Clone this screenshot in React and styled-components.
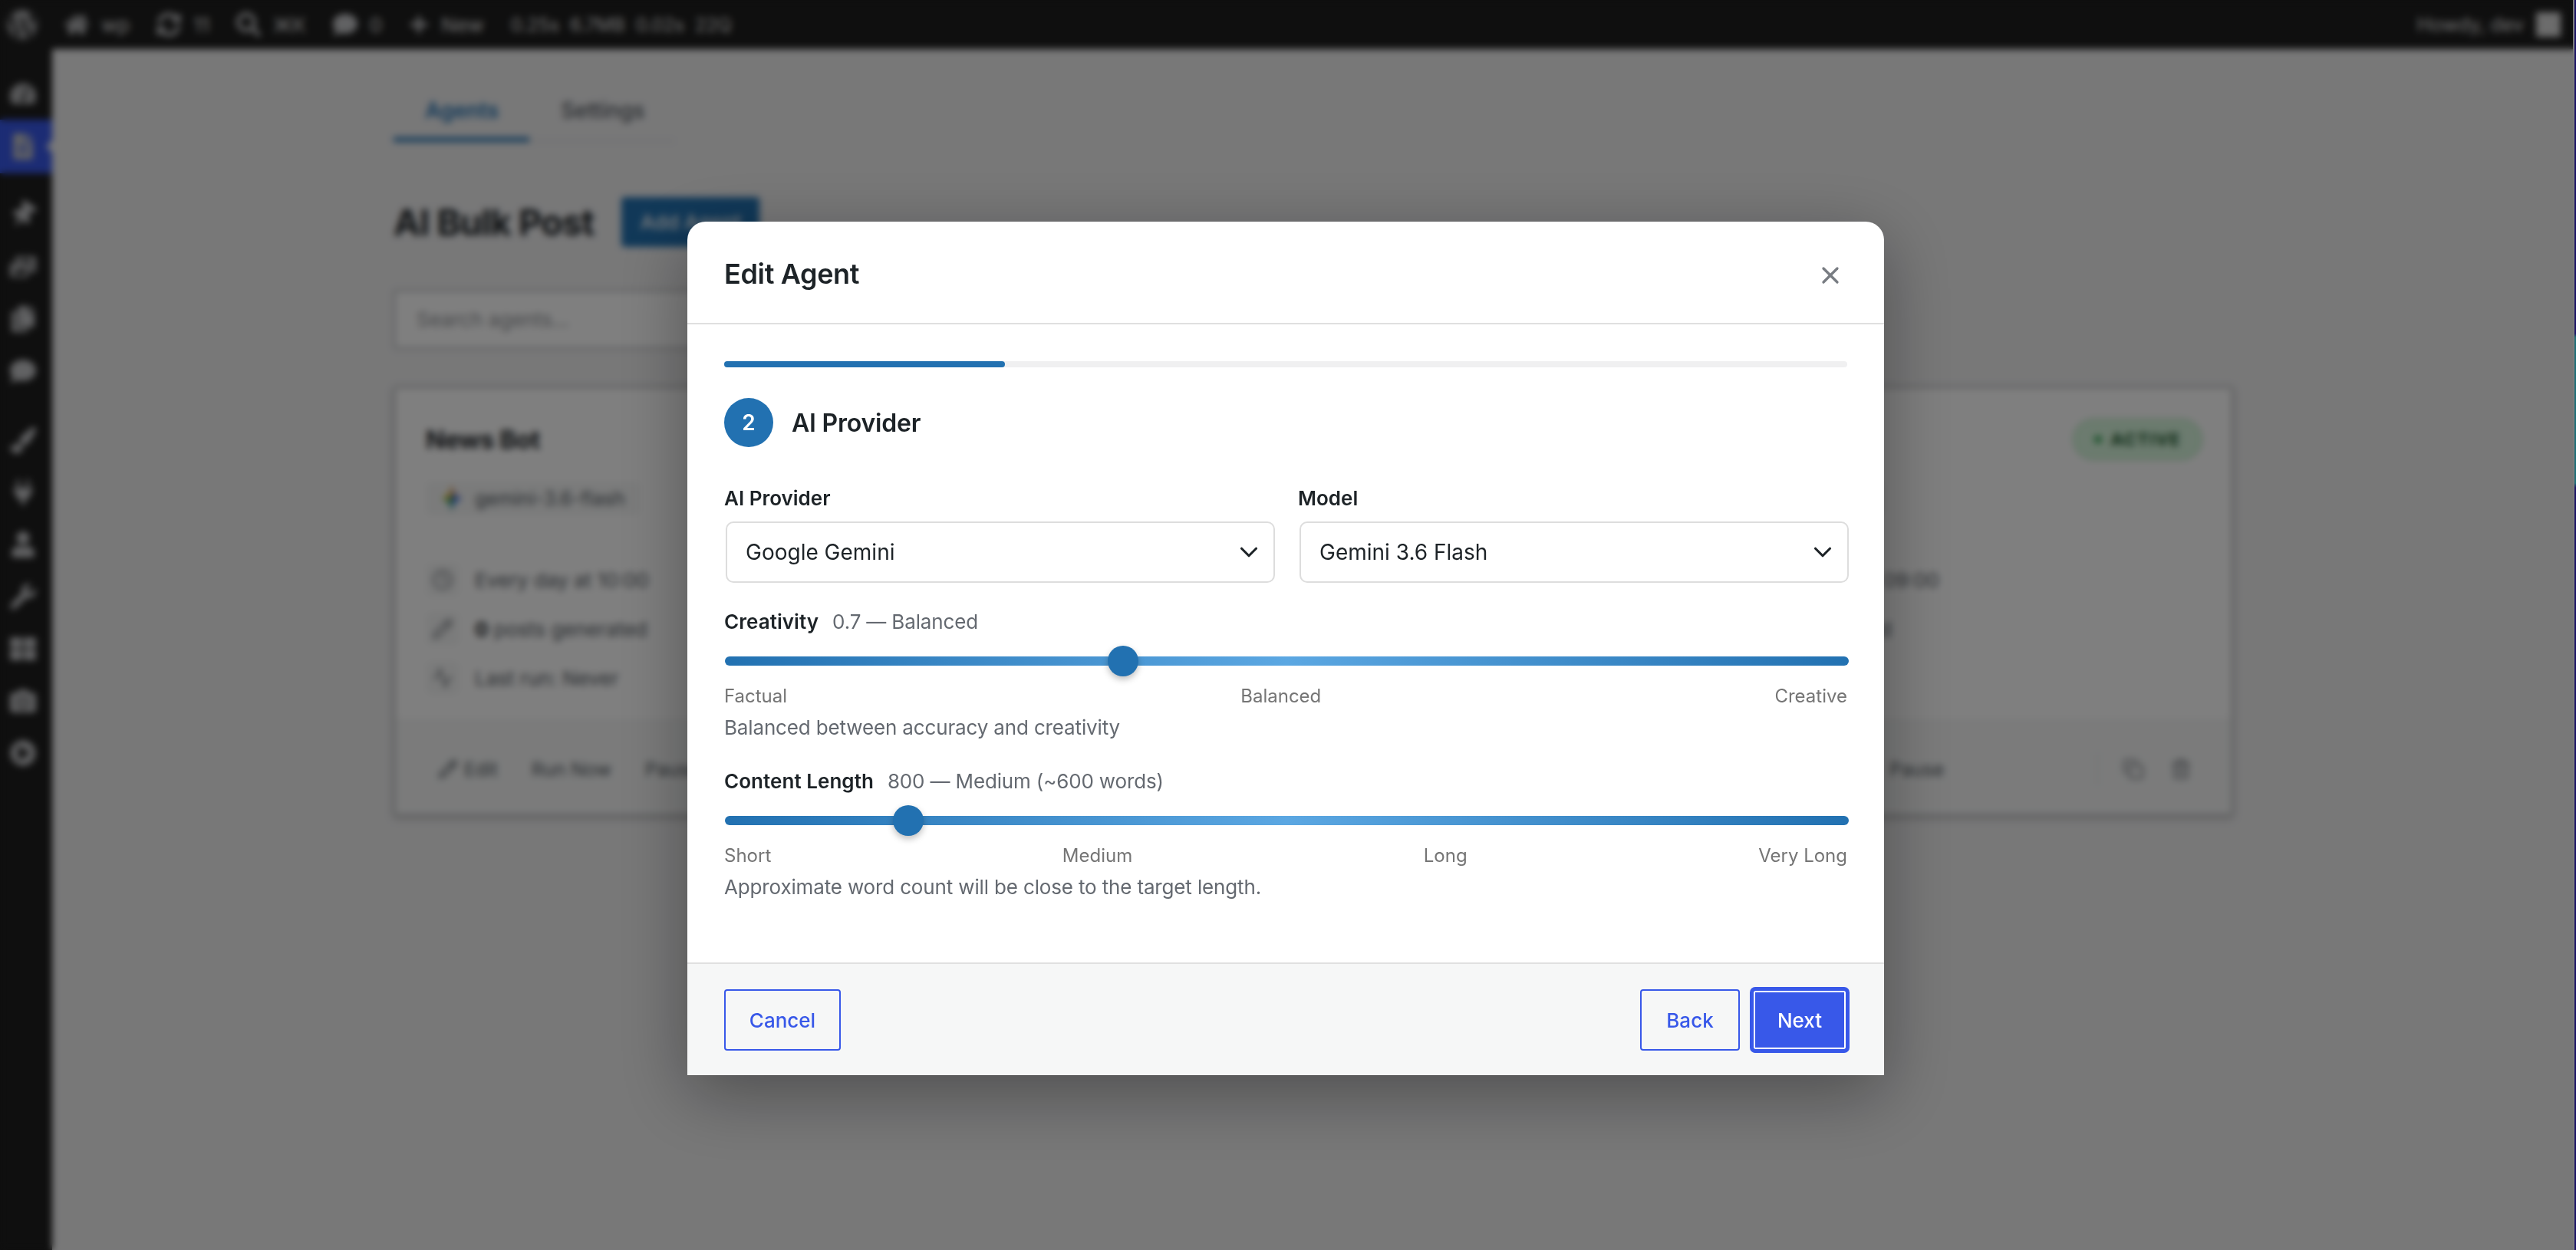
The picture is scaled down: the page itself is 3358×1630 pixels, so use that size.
import styled, { createGlobalStyle } from "styled-components"
import { ChevronDown, Clock, Copy, Pencil, Trash2, Activity, X } from "lucide-react"
import {
  FaWordpress, FaHome, FaSyncAlt, FaSearch, FaComment, FaPlus, FaTachometerAlt, FaFileAlt,
  FaThumbtack, FaPhotoVideo, FaCopy, FaPaintBrush, FaPlug, FaUser, FaWrench, FaThLarge,
  FaCamera, FaPlayCircle,
} from "react-icons/fa"

const GlobalStyle = createGlobalStyle`
  html, body { margin: 0; height: 100%; overflow: hidden; background: #f0f0f1; }
  * { box-sizing: border-box; }
  body { font-family: Inter, "Open Sans", sans-serif; color: #1d2327; }
`

const Page = styled.div`
  width: 100vw;
  height: 100vh;
  display: grid;
  grid-template-columns: 68px 1fr;
  grid-template-rows: 64px 1fr;
`

const AdminBar = styled.header`
  grid-column: 1 / 3;
  background: #1e1e1e;
  color: #e4e4e4;
  display: flex;
  align-items: center;
  padding: 0 20px 0 8px;
  font-size: 26px;
`
const BarItem = styled.div`
  display: flex;
  align-items: center;
  gap: 16px;
  margin-right: ${(p) => p.$gap ?? 35}px;
  svg { color: #c3c4c7; font-size: ${(p) => p.$icon ?? 32}px; }
`
const BarMetrics = styled.div`
  display: flex;
  gap: 14px;
  font-size: 24px;
`
const Howdy = styled.div`
  margin-left: auto;
  display: flex;
  align-items: center;
  gap: 16px;
  font-size: 25px;
`
const Avatar = styled.div`
  width: 32px;
  height: 32px;
  background: #d8d8d8;
`

const SideMenu = styled.nav`
  background: #1e1e1e;
  padding-top: 24px;
  display: flex;
  flex-direction: column;
`
const MenuItem = styled.div`
  position: relative;
  height: ${(p) => (p.$active ? 70 : 68)}px;
  margin-top: ${(p) => p.$sep ?? 0}px;
  padding-right: 8px;
  display: flex;
  align-items: center;
  justify-content: center;
  color: #c3c4c7;
  font-size: 34px;
  background: ${(p) => (p.$active ? "#3858e9" : "transparent")};
  svg { transform: rotate(${(p) => p.$tilt ?? 0}deg); }
  ${(p) =>
    p.$active &&
    `&::after {
      content: "";
      position: absolute;
      right: 0;
      top: 50%;
      margin-top: -8px;
      border: 8px solid transparent;
      border-right-color: #f0f0f1;
    }`}
`

const Main = styled.main`
  min-width: 0;
`
const Wrap = styled.div`
  max-width: 2400px;
  margin: 0 auto;
  padding-top: 40px;
`
const Tabs = styled.div`
  display: flex;
  width: 367px;
  border-bottom: 2px solid #dcdcde;
`
const Tab = styled.div`
  padding: 22px 40px 17px 41px;
  font-size: 28px;
  line-height: 36px;
  font-weight: ${(p) => (p.$active ? 600 : 500)};
  color: ${(p) => (p.$active ? "#2271b1" : "#50575e")};
  margin-bottom: -2px;
  border-bottom: 6px solid ${(p) => (p.$active ? "#2271b1" : "transparent")};
`
const TitleRow = styled.div`
  display: flex;
  align-items: center;
  gap: 36px;
  margin-top: 72px;
`
const PageTitle = styled.h1`
  margin: 0;
  font-size: 47px;
  font-weight: 700;
  letter-spacing: -1px;
`
const AddButton = styled.div`
  width: 180px;
  height: 65px;
  display: flex;
  align-items: center;
  justify-content: center;
  background: #2271b1;
  border-radius: 4px;
  color: #fff;
  font-size: 26px;
  font-weight: 500;
`
const SearchBox = styled.div`
  width: 800px;
  height: 77px;
  margin-top: 56px;
  padding-left: 28px;
  display: flex;
  align-items: center;
  background: #fff;
  border: 2px solid #a7aaad;
  border-radius: 4px;
  color: #8c8f94;
  font-size: 26px;
`
const CardGrid = styled.div`
  display: grid;
  grid-template-columns: repeat(3, 776px);
  gap: 35px;
  margin-top: 49px;
`
const Card = styled.article`
  height: 560px;
  background: #fff;
  border: 2px solid #a7aaad;
  border-radius: 4px;
  box-shadow: 0 3px 8px rgba(0, 0, 0, 0.2);
  display: flex;
  flex-direction: column;
`
const CardTop = styled.div`
  flex: 1;
  padding: 40px 38px 0 40px;
`
const CardHead = styled.div`
  display: flex;
  justify-content: space-between;
  align-items: center;
  min-height: 54px;
`
const CardName = styled.h2`
  margin: 0;
  font-size: 33px;
  font-weight: 700;
  letter-spacing: -0.5px;
`
const Badge = styled.span`
  display: inline-flex;
  align-items: center;
  gap: 12px;
  height: 54px;
  padding: 0 26px;
  border: 2px solid #b5e3bf;
  border-radius: 27px;
  background: #d8f7de;
  color: #0f4d20;
  font-size: 22px;
  font-weight: 700;
  letter-spacing: 1.5px;
  &::before {
    content: "";
    width: 10px;
    height: 10px;
    border-radius: 50%;
    background: #2a9d4a;
  }
`
const Chip = styled.div`
  display: inline-flex;
  align-items: center;
  gap: 16px;
  height: 44px;
  margin-top: 28px;
  padding: 0 20px;
  background: #f6f7f7;
  border-radius: 6px;
  color: #50575e;
  font-size: 25px;
`
const CardRows = styled.div`
  margin-top: 34px;
  padding-top: 25px;
  border-top: 2px solid #f7f7f8;
  display: flex;
  flex-direction: column;
  gap: 20px;
`
const CardRow = styled.div`
  display: flex;
  align-items: center;
  gap: 20px;
  height: 44px;
  color: #50575e;
  font-size: 26px;
  b { color: #1d2327; font-weight: 700; }
`
const RowIcon = styled.span`
  width: 44px;
  height: 44px;
  display: flex;
  align-items: center;
  justify-content: center;
  background: #f6f7f7;
  border-radius: 8px;
  color: #787c82;
`
const CardFoot = styled.div`
  height: 124px;
  padding: 4px 52px 0 56px;
  display: flex;
  align-items: center;
  background: #f6f7f7;
  border-top: 2px solid #f0f0f1;
  color: #50575e;
  font-size: 24.5px;
`
const FootAction = styled.span`
  display: inline-flex;
  align-items: center;
  gap: 8px;
  margin-right: 44px;
`
const FootTools = styled.div`
  margin-left: auto;
  height: 44px;
  padding-left: 32px;
  display: flex;
  align-items: center;
  gap: 34px;
  border-left: 2px solid #e6e6e8;
  color: #787c82;
`

const Overlay = styled.div`
  position: fixed;
  inset: 0;
  padding: 289px 6px 0 0;
  display: flex;
  justify-content: center;
  align-items: flex-start;
  background: rgba(0, 0, 0, 0.5);
  backdrop-filter: blur(5px);
`
// sliver of whatever sat behind the captured window
const WindowEdge = styled.div`
  position: fixed;
  top: 0;
  right: 0;
  bottom: 0;
  width: 4px;
  border-left: 2px solid #7d7d7d;
  background: linear-gradient(
    180deg,
    #1c1466 0,
    #1c1466 435px,
    #1f6f78 440px,
    #1f6f78 630px,
    #1c1466 636px
  );
`
const Modal = styled.section`
  width: 1560px;
  background: #fff;
  border-radius: 24px 24px 0 0;
  box-shadow: 0 24px 90px rgba(0, 0, 0, 0.35);
`
const ModalHeader = styled.div`
  height: 134px;
  padding: 4px 48px 0;
  display: flex;
  align-items: center;
  justify-content: space-between;
  border-bottom: 2px solid #e0e0e0;
`
const ModalTitle = styled.h2`
  margin: 0;
  font-size: 36px;
  font-weight: 600;
  letter-spacing: -0.35px;
`
const CloseButton = styled.span`
  display: flex;
  margin: 4px 4px 0 0;
  color: #787c82;
`
const ModalBody = styled.div`
  padding: 48px 48px 82px;
`
const Progress = styled.div`
  height: 8px;
  border-radius: 4px;
  background: #f0f0f1;
`
const ProgressFill = styled.div`
  height: 100%;
  border-radius: 4px;
  background: #2271b1;
`
const StepHead = styled.div`
  display: flex;
  align-items: center;
  gap: 24px;
  margin-top: 40px;
`
const StepNumber = styled.span`
  width: 64px;
  height: 64px;
  display: flex;
  align-items: center;
  justify-content: center;
  border-radius: 50%;
  background: #2271b1;
  color: #fff;
  font-size: 28px;
  font-weight: 600;
`
const StepTitle = styled.h3`
  margin: 0;
  font-size: 32px;
  font-weight: 600;
  letter-spacing: -0.2px;
`
const FieldGrid = styled.div`
  display: grid;
  grid-template-columns: 1fr 1fr;
  gap: 32px;
  margin-top: 51px;
`
const FieldLabel = styled.label`
  display: block;
  margin-bottom: 14px;
  font-size: 26px;
  line-height: 32px;
  font-weight: 600;
`
const SelectWrap = styled.div`
  position: relative;
  width: 100%;
  margin-left: 2px;
  svg { position: absolute; right: 15px; top: 21px; pointer-events: none; color: #1d2327; }
`
const Select = styled.select`
  display: block;
  width: 100%;
  height: 80px;
  padding: 0 60px 0 24px;
  appearance: none;
  background: #fff;
  border: 2px solid #ddd;
  border-radius: 10px;
  color: #1d2327;
  font-family: inherit;
  font-size: 28px;
`
const SliderField = styled.div`
  margin-top: ${(p) => p.$top}px;
`
const SliderHead = styled.div`
  display: flex;
  gap: 18px;
  font-size: 26px;
  line-height: 32px;
  color: #646970;
  strong { color: #1d2327; font-weight: 600; letter-spacing: 0.05px; }
  span { letter-spacing: -0.15px; }
`
const Range = styled.input`
  display: block;
  width: 1465px;
  height: 40px;
  margin: 15px 0 0 1px;
  appearance: none;
  background: transparent;
  &::-webkit-slider-runnable-track {
    height: 12px;
    border-radius: 6px;
    background: linear-gradient(90deg, #2271b1 0%, #5ba7e2 50%, #2271b1 100%);
  }
  &::-webkit-slider-thumb {
    appearance: none;
    width: 40px;
    height: 40px;
    margin-top: -14px;
    border-radius: 50%;
    background: #2271b1;
    box-shadow: 0 4px 8px rgba(0, 0, 0, 0.25);
  }
`
const Scale = styled.div`
  display: flex;
  justify-content: space-between;
  margin-top: 10px;
  font-size: 24px;
  line-height: 32px;
  color: #757575;
`
const Hint = styled.p`
  margin: 9px 0 0;
  font-size: 26px;
  line-height: 32px;
  letter-spacing: -0.15px;
  color: #646970;
`
const ModalFooter = styled.div`
  height: 147px;
  padding: 33px 48px 0;
  display: flex;
  align-items: flex-start;
  gap: 16px;
  background: #f6f7f7;
  border-top: 2px solid #e0e0e0;
`
const FooterButton = styled.button`
  height: 80px;
  padding: 0;
  width: ${(p) => p.$width}px;
  margin-left: ${(p) => (p.$push ? "auto" : 0)};
  border-radius: 4px;
  font-family: inherit;
  font-size: 26px;
  font-weight: 500;
  border: 2px solid #3858e9;
  background: ${(p) => (p.$primary ? "#3858e9" : "transparent")};
  color: ${(p) => (p.$primary ? "#fff" : "#3858e9")};
  box-shadow: ${(p) => (p.$primary ? "0 0 0 3px #3858e9, inset 0 0 0 2px #fff" : "none")};
`

const menu = [
  { icon: <FaTachometerAlt /> },
  { icon: <FaFileAlt />, active: true },
  { icon: <FaThumbtack />, sep: 20, tilt: 35 },
  { icon: <FaPhotoVideo /> },
  { icon: <FaCopy /> },
  { icon: <FaComment /> },
  { icon: <FaPaintBrush />, sep: 22 },
  { icon: <FaPlug /> },
  { icon: <FaUser /> },
  { icon: <FaWrench /> },
  { icon: <FaThLarge /> },
  { icon: <FaCamera /> },
  { icon: <FaPlayCircle /> },
]

const agents = [
  { name: "News Bot", model: "gemini-3.6-flash", schedule: "Every day at 10:00" },
  { name: "Tech Digest", model: "gemini-3.6-flash", schedule: "Every day at 12:00" },
  { name: "Weekly Roundup", model: "gemini-3.6-flash", schedule: "Every Monday at 09:00" },
]

const GeminiIcon = () => (
  <svg width="28" height="38" viewBox="0 0 28 38">
    <path d="M14 0 C15 11 19 17 28 19 L14 19 Z" fill="#ea4335" />
    <path d="M14 0 C13 11 9 17 0 19 L14 19 Z" fill="#fbbc04" />
    <path d="M14 38 C13 27 9 21 0 19 L14 19 Z" fill="#34a853" />
    <path d="M14 38 C15 27 19 21 28 19 L14 19 Z" fill="#4285f4" />
    <path d="M14 6 C15 13 18 17 28 19 C18 21 15 25 14 32 Z" fill="#2b6fe8" />
  </svg>
)

const AgentCard = ({ agent }) => (
  <Card>
    <CardTop>
      <CardHead>
        <CardName>{agent.name}</CardName>
        <Badge>ACTIVE</Badge>
      </CardHead>
      <Chip>
        <GeminiIcon />
        {agent.model}
      </Chip>
      <CardRows>
        <CardRow>
          <RowIcon><Clock size={28} /></RowIcon>
          {agent.schedule}
        </CardRow>
        <CardRow>
          <RowIcon><Pencil size={28} /></RowIcon>
          <span><b>0</b> posts generated</span>
        </CardRow>
        <CardRow>
          <RowIcon><Activity size={28} /></RowIcon>
          Last run: Never
        </CardRow>
      </CardRows>
    </CardTop>
    <CardFoot>
      <FootAction><Pencil size={26} />Edit</FootAction>
      <FootAction>Run Now</FootAction>
      <FootAction>Pause</FootAction>
      <FootTools>
        <Copy size={28} />
        <Trash2 size={28} />
      </FootTools>
    </CardFoot>
  </Card>
)

const App = () => {
  return (
    <Page>
      <GlobalStyle />
      <AdminBar>
        <BarItem $icon={42} $gap={34}><FaWordpress /></BarItem>
        <BarItem>
          <FaHome />
          wp
        </BarItem>
        <BarItem><FaSyncAlt />11</BarItem>
        <BarItem><FaSearch />ЖК</BarItem>
        <BarItem><FaComment />0</BarItem>
        <BarItem $icon={26}><FaPlus />New</BarItem>
        <BarMetrics>
          <span>0.25s</span>
          <span>6.7MB</span>
          <span>0.02s</span>
          <span>22Q</span>
        </BarMetrics>
        <Howdy>
          Howdy, dev
          <Avatar />
        </Howdy>
      </AdminBar>

      <SideMenu>
        {menu.map((item, i) => (
          <MenuItem key={i} $active={item.active} $sep={item.sep} $tilt={item.tilt}>{item.icon}</MenuItem>
        ))}
      </SideMenu>

      <Main>
        <Wrap>
          <Tabs>
            <Tab $active>Agents</Tab>
            <Tab>Settings</Tab>
          </Tabs>
          <TitleRow>
            <PageTitle>AI Bulk Post</PageTitle>
            <AddButton>Add Agent</AddButton>
          </TitleRow>
          <SearchBox>Search agents...</SearchBox>
          <CardGrid>
            {agents.map((agent) => (
              <AgentCard key={agent.name} agent={agent} />
            ))}
          </CardGrid>
        </Wrap>
      </Main>

      <Overlay>
        <Modal>
          <ModalHeader>
            <ModalTitle>Edit Agent</ModalTitle>
            <CloseButton><X size={36} strokeWidth={2.2} /></CloseButton>
          </ModalHeader>
          <ModalBody>
            <Progress>
              <ProgressFill style={{ width: `${(1 / 4) * 100}%` }} />
            </Progress>
            <StepHead>
              <StepNumber>2</StepNumber>
              <StepTitle>AI Provider</StepTitle>
            </StepHead>
            <FieldGrid>
              <div>
                <FieldLabel>AI Provider</FieldLabel>
                <SelectWrap>
                  <Select defaultValue="gemini">
                    <option value="gemini">Google Gemini</option>
                  </Select>
                  <ChevronDown size={38} strokeWidth={2} />
                </SelectWrap>
              </div>
              <div>
                <FieldLabel>Model</FieldLabel>
                <SelectWrap>
                  <Select defaultValue="flash">
                    <option value="flash">Gemini 3.6 Flash</option>
                  </Select>
                  <ChevronDown size={38} strokeWidth={2} />
                </SelectWrap>
              </div>
            </FieldGrid>
            <SliderField $top={35}>
              <SliderHead>
                <strong>Creativity</strong>
                <span>0.7 — Balanced</span>
              </SliderHead>
              <Range type="range" min="0" max="2" step="0.1" defaultValue="0.7" />
              <Scale>
                <span>Factual</span>
                <span>Balanced</span>
                <span>Creative</span>
              </Scale>
              <Hint>Balanced between accuracy and creativity</Hint>
            </SliderField>
            <SliderField $top={38}>
              <SliderHead>
                <strong>Content Length</strong>
                <span>800 — Medium (~600 words)</span>
              </SliderHead>
              <Range type="range" min="100" max="4650" step="1" defaultValue="800" />
              <Scale>
                <span>Short</span>
                <span>Medium</span>
                <span>Long</span>
                <span>Very Long</span>
              </Scale>
              <Hint>Approximate word count will be close to the target length.</Hint>
            </SliderField>
          </ModalBody>
          <ModalFooter>
            <FooterButton $width={152}>Cancel</FooterButton>
            <FooterButton $width={130} $push>Back</FooterButton>
            <FooterButton $width={124} $primary>Next</FooterButton>
          </ModalFooter>
        </Modal>
      </Overlay>
      <WindowEdge />
    </Page>
  )
}

export default App
